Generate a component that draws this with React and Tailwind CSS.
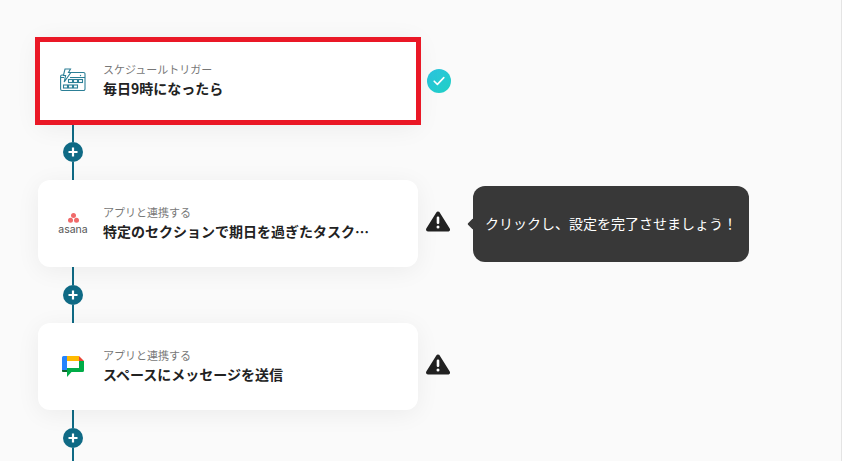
const TriggerIcon = () => (
    <svg width="26" height="25" viewBox="0 0 26 25" fill="none" stroke="#2c7f96" strokeWidth="1.1">
        <path d="M10 4.5H23.5a1.5 1.5 0 0 1 1.5 1.5V21a1.5 1.5 0 0 1-1.5 1.5H2A1.5 1.5 0 0 1 .6 21V8.5A1.5 1.5 0 0 1 2 7H3.5" />
        <path d="M.6 9.5H4M10 9.5H25" />
        <rect x="8.5" y="11.5" width="4" height="3" />
        <rect x="13.5" y="11.5" width="4" height="3" />
        <rect x="18.5" y="11.5" width="4" height="3" />
        <rect x="3.5" y="17" width="4" height="3" />
        <rect x="8.5" y="17" width="4" height="3" />
        <rect x="13.5" y="17" width="4" height="3" />
        <path d="M5 1H10.5L8.5 4.5H10.8L4.2 14L5.6 7.5H3.4Z" fill="#fff" />
        <circle cx="20.5" cy="7.5" r="0.7" fill="#2c7f96" stroke="none" />
    </svg>
);

const AsanaIcon = () => (
    <div className="flex flex-col items-center">
        <svg width="11" height="10" viewBox="0 0 11 10">
            <circle cx="5.5" cy="2.6" r="2.5" fill="#f06a6a" />
            <circle cx="2.5" cy="7.2" r="2.5" fill="#f06a6a" />
            <circle cx="8.5" cy="7.2" r="2.5" fill="#f06a6a" />
        </svg>
        <span className="mt-[1px] text-[10.5px] leading-[11px] text-[#555] font-['Inter',sans-serif]">asana</span>
    </div>
);

const ChatIcon = () => (
    <svg width="22" height="21" viewBox="0 0 22 21">
        <path d="M0 1.5A1.5 1.5 0 0 1 1.5 0H5V14H0Z" fill="#2684fc" />
        <path d="M5 0H17V5H5Z" fill="#ffba00" />
        <path d="M17 0L22 5H17Z" fill="#ea4335" />
        <path d="M17 5H22V14.5A1.5 1.5 0 0 1 20.5 16H5V12H17Z" fill="#00ac47" />
        <path d="M0 14.5V15A1.5 1.5 0 0 0 1.5 16H5V21L9.5 16H5V14H0Z" fill="#00ac47" />
        <path d="M0 14H5V16H1.5A1.5 1.5 0 0 1 0 14.5Z" fill="#0d652d" />
    </svg>
);

const CheckBadge = () => (
    <div className="w-6 h-6 rounded-full bg-gradient-to-br from-[#2cc3e0] to-[#1fd0c4] flex items-center justify-center">
        <svg width="12" height="10" viewBox="0 0 12 10" fill="none" stroke="#fff" strokeWidth="1.6" strokeLinecap="round" strokeLinejoin="round">
            <path d="M1.2 5.2L4.4 8.4L10.8 1.6" />
        </svg>
    </div>
);

const WarnIcon = () => (
    <svg width="24" height="21" viewBox="0 0 24 21">
        <path d="M12 2.5L22 18.5H2Z" fill="#222" stroke="#222" strokeWidth="4" strokeLinejoin="round" />
        <rect x="10.7" y="5.5" width="2.6" height="7.5" rx="1.2" fill="#fff" />
        <circle cx="12" cy="16" r="1.5" fill="#fff" />
    </svg>
);

const Connector = () => (
    <div className="w-[70px] h-[56px] flex flex-col items-center">
        <div className="w-0.5 flex-1 bg-[#0f6a85]"></div>
        <div className="w-5 h-5 rounded-full bg-[#0f6a85] flex items-center justify-center shrink-0">
            <svg width="10" height="10" viewBox="0 0 10 10" stroke="#fff" strokeWidth="2.2">
                <path d="M5 0.5V9.5M0.5 5H9.5" />
            </svg>
        </div>
        <div className="w-0.5 flex-1 bg-[#0f6a85]"></div>
    </div>
);

const Card = ({ icon, label, title, active }) => (
    <div className={`relative w-[380px] h-[87px] bg-white flex items-center shadow-[0_4px_24px_rgba(0,0,0,0.06)] ${active ? '' : 'rounded-xl'}`}>
        <div className="w-[60px] flex justify-center shrink-0 ml-[5px]">{icon}</div>
        <div className="min-w-0 flex-1 pb-[3px]">
            <p className="text-[11px] leading-[18px] text-[#777]">{label}</p>
            <p className="text-[14px] leading-[20px] font-bold text-[#222] whitespace-nowrap">{title}</p>
        </div>
        {active && <div className="absolute -left-[3px] -right-[3px] top-0 -bottom-[1px] border-[5px] border-[#ea1826]"></div>}
    </div>
);

export default function App() {
    return (
        <div className="h-screen overflow-hidden bg-[#fafafa] border-r border-[#e4e4e4] mr-[2px] pt-[37px] pl-[38px] font-['Noto_Sans_CJK_JP','Noto_Sans',sans-serif]">
            <div className="flex items-center">
                <Card active icon={<TriggerIcon />} label="スケジュールトリガー" title="毎日9時になったら" />
                <div className="ml-[9px] mt-[1px]"><CheckBadge /></div>
            </div>
            <Connector />
            <div className="flex items-center">
                <Card icon={<AsanaIcon />} label="アプリと連携する" title="特定のセクションで期日を過ぎたタスク…" />
                <div className="ml-2 -mt-[5px]"><WarnIcon /></div>
                <div className="relative ml-[23px] w-[276px] h-[76px] rounded-xl bg-[#383838] flex items-center pl-3">
                    <div className="absolute -left-1 top-[34px] w-2 h-2 rotate-45 rounded-[1px] bg-[#383838]"></div>
                    <span className="text-[14px] text-white">クリックし、設定を完了させましょう！</span>
                </div>
            </div>
            <Connector />
            <div className="flex items-center">
                <Card icon={<ChatIcon />} label="アプリと連携する" title="スペースにメッセージを送信" />
                <div className="ml-2 -mt-[5px]"><WarnIcon /></div>
            </div>
            <Connector />
        </div>
    );
}
